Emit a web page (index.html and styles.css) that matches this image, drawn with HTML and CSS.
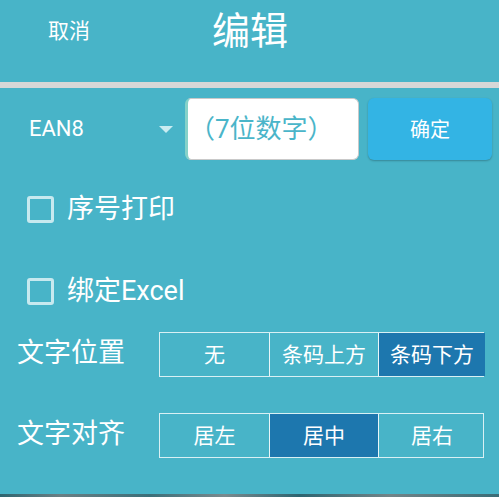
FILE: index.html
```html
<!DOCTYPE html>
<html lang="zh">
<head>
<meta charset="utf-8">
<title>编辑</title>
<link rel="stylesheet" href="styles.css">
</head>
<body>
<div class="screen">
  <header class="header">
    <span class="cancel">取消</span>
    <span class="title">编辑</span>
  </header>
  <div class="divider"></div>
  <div class="code-row">
    <div class="spinner">
      <span class="spinner-text">EAN8</span>
      <span class="spinner-arrow"></span>
    </div>
    <div class="input"><span class="hint">（7位数字）</span></div>
    <button class="confirm">确定</button>
  </div>
  <div class="check-row">
    <span class="checkbox"></span>
    <span class="check-label">序号打印</span>
  </div>
  <div class="check-row">
    <span class="checkbox"></span>
    <span class="check-label">绑定Excel</span>
  </div>
  <div class="seg-row">
    <span class="seg-label">文字位置</span>
    <div class="segmented">
      <span class="seg">无</span>
      <span class="seg">条码上方</span>
      <span class="seg active">条码下方</span>
    </div>
  </div>
  <div class="seg-row second">
    <span class="seg-label">文字对齐</span>
    <div class="segmented">
      <span class="seg">居左</span>
      <span class="seg active">居中</span>
      <span class="seg">居右</span>
    </div>
  </div>
  <div class="spacer"></div>
  <div class="bottom-strip"></div>
</div>
</body>
</html>
```
FILE: styles.css
```css
* { box-sizing: border-box; }
html, body { margin: 0; padding: 0; }
body {
  width: 499px;
  height: 497px;
  overflow: hidden;
  background: #48b4c8;
  font-family: Roboto, "Noto Sans CJK SC", sans-serif;
  color: #ffffff;
}
.screen {
  width: 499px;
  height: 497px;
  display: flex;
  flex-direction: column;
}
.header {
  height: 82px;
  padding-bottom: 20px;
  padding-left: 48px;
  display: flex;
  align-items: center;
}
.cancel {
  font-size: 21px;
  line-height: 24px;
  width: 164px;
}
.title {
  font-size: 38px;
  line-height: 44px;
}
.divider {
  height: 6px;
  background: #d7d7d7;
}
.code-row {
  margin-top: 9px;
  height: 63px;
  padding-left: 29px;
  display: flex;
  align-items: center;
}
.spinner {
  width: 156px;
  display: flex;
  align-items: center;
  justify-content: space-between;
  padding-right: 12px;
}
.spinner-text {
  font-size: 22px;
  line-height: 26px;
}
.spinner-arrow {
  width: 0;
  height: 0;
  border-left: 7px solid transparent;
  border-right: 7px solid transparent;
  border-top: 7px solid #c9ecf1;
  margin-top: 2px;
}
.input {
  width: 174px;
  height: 62px;
  background: #ffffff;
  border: 1px solid #c9c9c9;
  border-left: 3px solid #86d2c9;
  border-radius: 6px;
  display: flex;
  align-items: center;
  padding-left: 1px;
}
.hint {
  color: #4ab5c9;
  font-size: 26px;
  line-height: 30px;
}
.confirm {
  margin-left: 9px;
  width: 124px;
  height: 62px;
  border: none;
  border-radius: 6px;
  background: #33b4e4;
  color: #ffffff;
  font-family: Roboto, "Noto Sans CJK SC", sans-serif;
  font-size: 20px;
  box-shadow: 0 1px 2px rgba(0, 0, 0, 0.25);
  padding: 0;
}
.check-row {
  height: 82px;
  padding-left: 27px;
  display: flex;
  align-items: center;
}
.code-row + .check-row {
  margin-top: 8px;
}
.checkbox {
  width: 27px;
  height: 27px;
  border: 3px solid #c7e9ef;
  border-radius: 3px;
}
.check-label {
  margin-left: 13px;
  font-size: 27px;
  line-height: 30px;
}
.seg-row {
  height: 45px;
  padding-left: 17px;
  display: flex;
  align-items: center;
}
.seg-row.second {
  margin-top: 36px;
}
.seg-label {
  width: 142px;
  font-size: 27px;
  line-height: 32px;
  margin-top: -4px;
}
.segmented {
  width: 325px;
  height: 45px;
  display: grid;
  grid-template-columns: 109px 109px 107px;
  border: 1px solid #d9f0f4;
}
.seg {
  display: flex;
  align-items: center;
  justify-content: center;
  font-size: 21px;
  line-height: 24px;
  border-left: 1px solid #e8f6f9;
}
.seg:first-child { border-left: none; }
.seg.active { background: #1d77ae; }
.spacer { flex: 1; }
.bottom-strip {
  height: 3px;
  background: linear-gradient(90deg, #2e6570 0%, #6a7f84 12%, #3b6f79 30%, #7a8a8e 45%, #2d6470 60%, #728488 78%, #3a6c76 100%);
}
```
